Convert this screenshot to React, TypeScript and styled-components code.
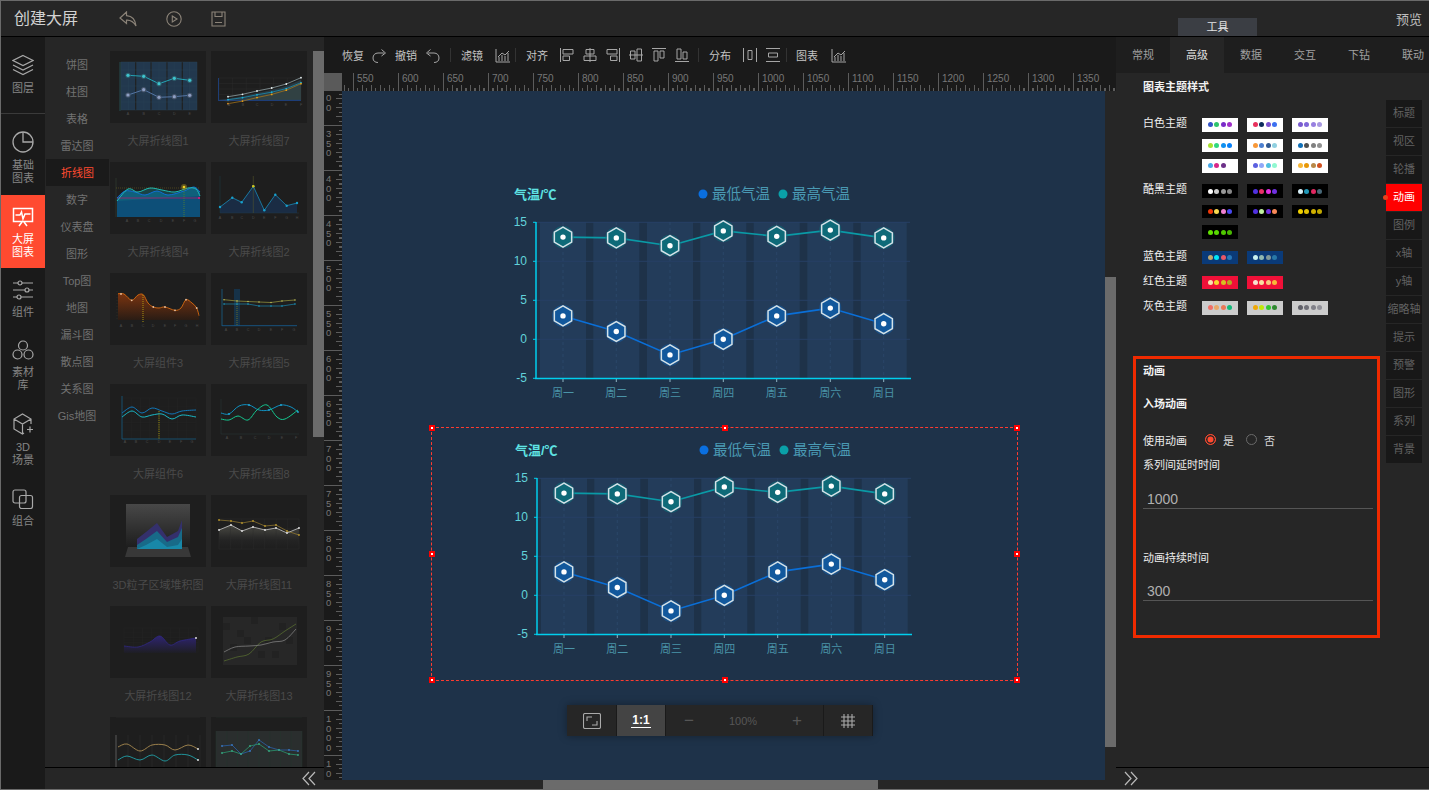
import * as React from "react";
import styled, { createGlobalStyle } from "styled-components";

const FONT = `"Liberation Sans", "Noto Sans CJK SC", sans-serif`;

const GlobalStyle = createGlobalStyle`
  html, body { margin: 0; padding: 0; background: #262626; }
  * { box-sizing: border-box; }
  body { font-family: ${FONT}; font-size: 11px; overflow: hidden; }
`;

const Frame = styled.div`
  width: 1429px;
  height: 790px;
  display: flex;
  flex-direction: column;
  overflow: hidden;
  background: #262626;
  border-top: 1px solid #6a6a6a;
  border-bottom: 1px solid #6a6a6a;
  border-left: 1px solid #6a6a6a;
`;

/* ---------- header ---------- */
const Header = styled.header`
  height: 36px;
  flex: none;
  display: flex;
  align-items: stretch;
  padding: 0 7px 0 13px;
  background: #262626;
  border-bottom: 1px solid #000;
`;
const AppTitle = styled.div`
  font-size: 16px;
  line-height: 35px;
  color: #d2d2d2;
  width: 64px;
  margin-right: 41px;
`;
const HeaderIcons = styled.div`
  display: flex;
  align-items: center;
  gap: 29px;
  color: #8b8378;
`;
const ToolTab = styled.div`
  width: 79px;
  height: 18px;
  margin: 17px 139px 0 auto;
  background: #3b3e44;
  color: #e4e4e4;
  text-align: center;
  line-height: 19px;
`;
const Preview = styled.div`
  font-size: 13px;
  line-height: 37px;
  color: #bdbdbd;
`;

const Body = styled.div`
  flex: 1;
  min-height: 0;
  display: flex;
`;

/* ---------- rail ---------- */
const Rail = styled.nav`
  width: 44px;
  flex: none;
  background: #1a1a1a;
  display: flex;
  flex-direction: column;
`;
const RailItem = styled.div<{ $h: number; $pt: number; $active?: boolean; $line?: boolean }>`
  height: ${p => p.$h}px;
  padding-top: ${p => p.$pt}px;
  display: flex;
  flex-direction: column;
  align-items: center;
  gap: 6px;
  flex: none;
  font-size: 11px;
  line-height: 13px;
  text-align: center;
  color: ${p => (p.$active ? "#fff" : "#858585")};
  background: ${p => (p.$active ? "#ff4a30" : "transparent")};
  border-bottom: ${p => (p.$line ? "1px solid #3a3a3a" : "none")};
  svg { color: ${p => (p.$active ? "#fff" : "#a8a8a8")}; flex: none; }
`;

/* ---------- library ---------- */
const Library = styled.section`
  width: 279px;
  flex: none;
  display: flex;
  flex-direction: column;
`;
const LibraryMain = styled.div`
  flex: 1;
  min-height: 0;
  display: flex;
  overflow: hidden;
  padding-top: 14px;
`;
const Categories = styled.ul`
  list-style: none;
  margin: 0;
  padding: 0;
  width: 64px;
  flex: none;
`;
const Category = styled.li<{ $active?: boolean }>`
  height: 27px;
  line-height: 29px;
  margin-left: ${p => (p.$active ? "1px" : "0")};
  text-align: center;
  color: ${p => (p.$active ? "#ff4a30" : "#727272")};
  background: ${p => (p.$active ? "#1a1a1a" : "transparent")};
`;
const ThumbGrid = styled.div`
  width: 198px;
  flex: none;
  margin-left: 1px;
  display: grid;
  grid-template-columns: 96px 96px;
  column-gap: 5px;
  grid-auto-rows: 111px;
`;
const ThumbCard = styled.div`
  display: flex;
  flex-direction: column;
`;
const ThumbArt = styled.div`
  height: 72px;
  flex: none;
  background: #1e1e1e;
  svg { display: block; }
`;
const ThumbCaption = styled.div`
  height: 36px;
  line-height: 36px;
  text-align: center;
  color: #4a4a4a;
  white-space: nowrap;
`;
const LibraryScroll = styled.div`
  width: 11px;
  margin-left: 5px;
  flex: none;
`;
const ScrollThumbV = styled.div<{ $h: number; $top?: number }>`
  width: 11px;
  height: ${p => p.$h}px;
  margin-top: ${p => p.$top ?? 0}px;
  background: #6b6b6b;
`;
const CollapseBar = styled.div<{ $right?: boolean }>`
  height: 22px;
  flex: none;
  display: flex;
  align-items: center;
  justify-content: ${p => (p.$right ? "flex-start" : "flex-end")};
  padding: ${p => (p.$right ? "0 0 0 8px" : "0 8px 0 0")};
  border-top: 1px solid #000;
  color: #b9b9b9;
`;

/* ---------- workspace ---------- */
const Workspace = styled.main`
  width: 792px;
  flex: none;
  display: flex;
  flex-direction: column;
  background: #1a1a1a;
`;
const Toolbar = styled.div`
  height: 36px;
  flex: none;
  display: flex;
  align-items: center;
  padding-left: 18px;
  color: #c4c4c4;
  svg { color: #a6a6a6; flex: none; }
`;
const ToolGroup = styled.div<{ $gap: number }>`
  display: flex;
  align-items: center;
  gap: ${p => p.$gap}px;
`;
const ToolSep = styled.span<{ $l: number; $r: number }>`
  width: 1px;
  height: 14px;
  margin: 0 ${p => p.$r}px 0 ${p => p.$l}px;
  background: #333;
  flex: none;
`;
const RulerRow = styled.div`
  height: 18px;
  flex: none;
  display: flex;
`;
const RulerCorner = styled.div`
  width: 18px;
  height: 18px;
  flex: none;
  background: #5a5a5a;
`;
const HRuler = styled.div`
  flex: 1;
  overflow: hidden;
`;
const HTrack = styled.div`
  margin-left: -34px;
  width: 810px;
  height: 18px;
  display: flex;
  background:
    repeating-linear-gradient(90deg, #5c5c5c 0 1px, transparent 1px 4.5px) left bottom / 100% 3px no-repeat,
    repeating-linear-gradient(90deg, #5c5c5c 0 1px, transparent 1px 9px) left bottom / 100% 6px no-repeat;
`;
const HMark = styled.div`
  width: 45px;
  flex: none;
  height: 18px;
  border-left: 1px solid #5c5c5c;
  padding-left: 3px;
  font-size: 10px;
  line-height: 11px;
  color: #777;
`;
const CanvasRow = styled.div`
  flex: 1;
  min-height: 0;
  display: flex;
`;
const VRuler = styled.div`
  width: 18px;
  flex: none;
  overflow: hidden;
`;
const VTrack = styled.div`
  margin-top: -11px;
  height: 720px;
  background:
    repeating-linear-gradient(180deg, #5c5c5c 0 1px, transparent 1px 4.5px) right top / 3px 100% no-repeat,
    repeating-linear-gradient(180deg, #5c5c5c 0 1px, transparent 1px 9px) right top / 6px 100% no-repeat;
`;
const VMark = styled.div<{ $first?: boolean }>`
  height: 45px;
  border-top: 1px solid #5c5c5c;
  padding: ${p => (p.$first ? "12px" : "3px")} 0 0 2px;
  font-size: 9.5px;
  line-height: 9.5px;
  color: #777;
  overflow: hidden;
  span { display: block; width: 7px; word-break: break-all; }
`;
const Canvas = styled.div`
  position: relative;
  flex: 1;
  overflow: hidden;
  background: #1e3249;
`;
const ChartNode = styled.div<{ $x: number; $y: number }>`
  position: absolute;
  left: ${p => p.$x}px;
  top: ${p => p.$y}px;
  width: 440px;
  height: 240px;
  svg { display: block; }
`;
const Selection = styled.div`
  position: absolute;
  left: 89px;
  top: 336px;
  width: 587px;
  height: 254px;
  border: 1px dashed #ff3b30;
`;
const Handle = styled.i<{ $x: string; $y: string }>`
  position: absolute;
  left: ${p => p.$x};
  top: ${p => p.$y};
  width: 6px;
  height: 6px;
  margin: -3px 0 0 -3px;
  background: #fff;
  border: 2px solid #f00;
`;
const ZoomBar = styled.div`
  position: absolute;
  left: 225px;
  top: 614px;
  height: 31px;
  display: flex;
  background: #262626;
  box-shadow: 0 0 8px rgba(0, 0, 0, 0.35);
  color: #aaa;
`;
const ZoomCell = styled.div<{ $w: number; $active?: boolean }>`
  width: ${p => p.$w}px;
  display: flex;
  align-items: center;
  justify-content: center;
  background: ${p => (p.$active ? "#444" : "transparent")};
  border-right: 1px solid #1a1a1a;
`;
const ZoomRange = styled(ZoomCell)`
  justify-content: space-between;
  padding: 0 21px 0 18px;
  color: #565656;
  font-size: 11px;
`;
const ZoomSign = styled.span`
  font-size: 17px;
  font-weight: 300;
  color: #565656;
`;
const OneToOne = styled.span`
  color: #fff;
  font-size: 12px;
  font-weight: bold;
  line-height: 13px;
  border-bottom: 1px solid #fff;
  padding: 0 1px;
`;
const VScroll = styled.div`
  width: 11px;
  flex: none;
  background: #262626;
`;
const HScroll = styled.div`
  height: 9px;
  flex: none;
  background: #262626;
  padding-left: 219px;
`;
const HThumb = styled.div`
  width: 335px;
  height: 9px;
  background: #6b6b6b;
`;

/* ---------- chart text ---------- */
const ChartTitle = styled.text`
  fill: #5fe3e3;
  font-size: 13px;
  font-weight: bold;
`;
const LegendText = styled.text`
  fill: #4a9ab4;
  font-size: 14.5px;
`;
const YLabel = styled.text`
  fill: #62d2da;
  font-size: 12px;
  text-anchor: end;
`;
const XLabel = styled.text`
  fill: #4a94a8;
  font-size: 11px;
  text-anchor: middle;
`;
const TinyLabel = styled.text`
  fill: #4c4c4c;
  font-size: 3.6px;
  text-anchor: middle;
`;

/* ---------- right panel ---------- */
const Panel = styled.aside`
  flex: 1;
  min-width: 0;
  display: flex;
  flex-direction: column;
  overflow: hidden;
`;
const Tabs = styled.div`
  height: 36px;
  flex: none;
  display: flex;
  background: #1e1e1e;
`;
const Tab = styled.div<{ $active?: boolean }>`
  width: 54px;
  flex: none;
  text-align: center;
  line-height: 36px;
  color: ${p => (p.$active ? "#dedede" : "#a0a0a0")};
  background: ${p => (p.$active ? "#262626" : "transparent")};
`;
const PanelBody = styled.div`
  flex: 1;
  min-height: 0;
  display: flex;
`;
const PanelContent = styled.div`
  width: 270px;
  flex: none;
`;
const SectionHead = styled.div`
  margin: 6px 0 0 27px;
  line-height: 16px;
  font-weight: bold;
  color: #f2f2f2;
`;
const ThemeList = styled.div`
  margin: 23px 0 0 27px;
  display: flex;
  flex-direction: column;
  gap: 11.75px;
`;
const ThemeGroup = styled.div`
  display: flex;
`;
const ThemeName = styled.div`
  width: 59px;
  flex: none;
  line-height: 11px;
  color: #f0f0f0;
`;
const SwatchGrid = styled.div`
  display: grid;
  grid-template-columns: repeat(3, 36px);
  column-gap: 9px;
  row-gap: 7px;
`;
const Swatch = styled.div<{ $bg: string }>`
  height: 13.5px;
  display: flex;
  align-items: center;
  justify-content: center;
  gap: 1.5px;
  background: ${p => p.$bg};
`;
const SwatchDot = styled.i<{ $c: string }>`
  width: 5px;
  height: 5px;
  border-radius: 50%;
  background: ${p => p.$c};
`;
const AnimBox = styled.div`
  width: 247px;
  height: 282px;
  margin: 41px 0 0 17px;
  padding: 0 5px 0 7px;
  border: 3px solid #ef2a00;
`;
const BoxHead = styled.div<{ $top: number }>`
  margin-top: ${p => p.$top}px;
  line-height: 14px;
  font-weight: bold;
  color: #f2f2f2;
`;
const FieldLabel = styled.div<{ $top: number }>`
  margin-top: ${p => p.$top}px;
  line-height: 14px;
  color: #ececec;
`;
const RadioRow = styled.div`
  margin-top: 22px;
  height: 14px;
  display: flex;
  align-items: center;
  color: #ececec;
`;
const RadioLabel = styled.span`
  width: 62px;
  flex: none;
`;
const Radio = styled.i<{ $on?: boolean }>`
  width: 11px;
  height: 11px;
  flex: none;
  border-radius: 50%;
  border: 1px solid ${p => (p.$on ? "#ff4a30" : "#6a6a6a")};
  background: ${p => (p.$on ? "#ff4a30" : "transparent")};
  box-shadow: ${p => (p.$on ? "inset 0 0 0 1.5px #262626" : "none")};
`;
const RadioText = styled.span<{ $gap: number }>`
  margin: 0 ${p => p.$gap}px 0 7px;
  color: #d8d8d8;
`;
const NumberInput = styled.input<{ $top: number }>`
  display: block;
  width: 230px;
  height: 18px;
  margin-top: ${p => p.$top}px;
  padding: 0 0 0 4px;
  background: transparent;
  border: none;
  border-bottom: 1px solid #555;
  outline: none;
  color: #b0b0b0;
  font-family: ${FONT};
  font-size: 14px;
`;
const SideTabs = styled.div`
  width: 36px;
  flex: none;
  padding-top: 27px;
  display: flex;
  flex-direction: column;
  gap: 1px;
`;
const SideTab = styled.div<{ $active?: boolean }>`
  position: relative;
  height: 27px;
  line-height: 27px;
  text-align: center;
  white-space: nowrap;
  color: ${p => (p.$active ? "#fff" : "#626262")};
  background: ${p => (p.$active ? "#f00" : "#181818")};
`;
const ActiveMark = styled.i`
  position: absolute;
  left: -3px;
  top: 11px;
  width: 5px;
  height: 5px;
  border-radius: 50%;
  background: #e8401c;
`;

/* ---------- drawing helpers ---------- */
type Pt = number[];

const poly = (p: Pt[]) => p.map(q => q.join(",")).join(" ");

// catmull-rom through the points, good enough for the little wave thumbnails
const smooth = (p: Pt[]) => {
  let d = `M${p[0][0]} ${p[0][1]}`;
  for (let i = 0; i < p.length - 1; i++) {
    const a = p[Math.max(i - 1, 0)];
    const b = p[i];
    const c = p[i + 1];
    const e = p[Math.min(i + 2, p.length - 1)];
    d += ` C${b[0] + (c[0] - a[0]) / 6} ${b[1] + (c[1] - a[1]) / 6} ${c[0] - (e[0] - b[0]) / 6} ${c[1] - (e[1] - b[1]) / 6} ${c[0]} ${c[1]}`;
  }
  return d;
};

const Line = ({ p, c, w = 1 }: { p: Pt[]; c: string; w?: number }) => (
  <polyline points={poly(p)} fill="none" stroke={c} strokeWidth={w} />
);
const Curve = ({ p, c, w = 1 }: { p: Pt[]; c: string; w?: number }) => (
  <path d={smooth(p)} fill="none" stroke={c} strokeWidth={w} />
);
const Dots = ({ p, c, r = 1 }: { p: Pt[]; c: string; r?: number }) => (
  <>
    {p.map((q, i) => (
      <circle key={i} cx={q[0]} cy={q[1]} r={r} fill={c} />
    ))}
  </>
);
const Letters = ({ xs, y, labels = "ABCDEFGH" }: { xs: number[]; y: number; labels?: string }) => (
  <>
    {xs.map((x, i) => (
      <TinyLabel key={i} x={x} y={y}>
        {labels[i]}
      </TinyLabel>
    ))}
  </>
);
const Grid = ({ x, y, w, h, nx, ny, c = "#2e2e2e" }: { x: number; y: number; w: number; h: number; nx: number; ny: number; c?: string }) => (
  <g stroke={c} strokeWidth={0.4}>
    {Array.from({ length: nx + 1 }, (_, i) => (
      <line key={"v" + i} x1={x + (w * i) / nx} x2={x + (w * i) / nx} y1={y} y2={y + h} />
    ))}
    {Array.from({ length: ny + 1 }, (_, i) => (
      <line key={"h" + i} x1={x} x2={x + w} y1={y + (h * i) / ny} y2={y + (h * i) / ny} />
    ))}
  </g>
);

const shift = (p: Pt[], dy: number) => p.map(q => [q[0], q[1] + dy]);

const t1a: Pt[] = [[18, 24.3], [33.7, 25.3], [49, 32.7], [64.3, 27.3], [79.7, 29.3]];
const t1b: Pt[] = [[18, 44], [33.7, 38.7], [49, 46.3], [64.3, 45.7], [79.7, 44.3]];
const t7: Pt[] = [[17, 45.7], [31.5, 43.3], [46, 40], [60.7, 37], [75.3, 33], [90, 26.7]];
const t4a: Pt[] = [[7, 36], [15, 29], [25, 30], [35, 33], [47, 29], [58, 33], [74, 29], [84, 25], [90, 30]];
const t4b: Pt[] = [[7, 39], [18, 27], [28, 30], [40, 26], [52, 28], [65, 30], [78, 26], [86, 27], [90, 34]];
const t2: Pt[] = [[9, 45], [21.3, 35.7], [30.7, 40.3], [42.3, 24.3], [53.3, 48.3], [64.3, 32.7], [75.7, 43.7], [86, 41]];
const t3: Pt[] = [[8, 20.7], [14, 21], [21.7, 27.3], [28, 22], [33.3, 21.7], [38, 30], [43.3, 34], [49, 35], [55, 34], [65, 37.3], [71, 35], [76, 26.7], [82, 30], [86.7, 35], [89, 42.7]];
const t6a: Pt[] = [[12, 29], [22, 23], [32, 29], [42, 24], [52, 27], [62, 30], [72, 27], [86, 26]];
const t6b: Pt[] = [[12, 33], [22, 27], [32, 33], [42, 31], [52, 30], [62, 35], [72, 31], [86, 33]];
const t8a: Pt[] = [[10, 29], [18, 30], [28, 22], [38, 21], [48, 26], [58, 26], [70, 21], [80, 23], [87, 28]];
const t8b: Pt[] = [[10, 35], [18, 36], [27, 32], [37, 36], [46, 26], [56, 21], [66, 33], [74, 35], [87, 26]];
const t11a: Pt[] = [[8, 25], [20, 26], [31, 28], [42, 26], [54, 31], [65, 30], [76, 36], [88, 40]];
const t11b: Pt[] = [[8, 35], [20, 30], [31, 36], [42, 32], [54, 35], [65, 33], [76, 38], [88, 33]];
const t12: Pt[] = [[14, 40], [28, 41], [40, 36], [50, 30], [60, 39], [70, 35], [86, 32]];

const thumbs: { title?: string; art: React.ReactNode }[] = [
  {
    title: "大屏折线图1",
    art: (
      <>
        {[11, 26.5, 42, 57.5, 73].map(x => (
          <rect key={x} x={x} y={11} width={14} height={48} fill="#22384e" />
        ))}
        <Grid x={11} y={11} w={76} h={48} nx={10} ny={6} c="#2b4358" />
        <line x1={10} x2={10} y1={11} y2={60} stroke="#2a6a70" strokeWidth={0.6} />
        <Line p={t1a} c="#24b0c0" w={0.9} />
        <Dots p={t1a} c="#2e5f6c" r={2.6} />
        <Dots p={t1a} c="#3ec4d0" r={1.6} />
        <Line p={t1b} c="#5a7cae" w={0.9} />
        <Dots p={t1b} c="#48566c" r={2.6} />
        <Dots p={t1b} c="#8d9fc4" r={1.6} />
        <Letters xs={[18, 33.7, 49, 64.3, 79.7]} y={64} />
      </>
    ),
  },
  {
    title: "大屏折线图7",
    art: (
      <>
        <Grid x={8} y={27} w={82} h={22} nx={6} ny={4} />
        <polygon points={`8,49 ${poly(shift(t7, 5))} 90,49`} fill="#3c3a26" />
        <polygon points={`8,49 ${poly(shift(t7, 2))} 90,49`} fill="#2c4450" opacity={0.7} />
        <line x1={7.5} x2={7.5} y1={27} y2={49} stroke="#1d4a9a" strokeWidth={0.7} />
        <line x1={7} x2={90} y1={49.4} y2={49.4} stroke="#1d4a9a" strokeWidth={0.8} />
        <Line p={t7} c="#9fb3b8" w={0.7} />
        <Line p={shift(t7, 3).map((q, i) => [q[0], q[1] + i * 0.4])} c="#189ac0" w={0.7} />
        <Line p={shift(t7, 6).map((q, i) => [q[0], q[1] - i * 0.2 + 1])} c="#b07a18" w={0.7} />
        <Dots p={t7} c="#e8f0f0" r={0.9} />
        <Dots p={shift(t7, 3).map((q, i) => [q[0], q[1] + i * 0.4])} c="#18b0d8" r={0.9} />
        <Dots p={shift(t7, 6).map((q, i) => [q[0], q[1] - i * 0.2 + 1])} c="#e8a018" r={0.9} />
        <Letters xs={[18, 32, 46, 61, 75, 90]} y={55} />
      </>
    ),
  },
  {
    title: "大屏折线图4",
    art: (
      <>
        <line x1={6} x2={6} y1={16} y2={55} stroke="#3a4a3a" strokeWidth={0.5} />
        <path d={`${smooth(t4a)} L90 55 L7 55 Z`} fill="#0d4f78" />
        <path d={`${smooth(t4b)} L90 34 L7 39 Z`} fill="#157a80" opacity={0.4} />
        <line x1={6} x2={90} y1={26} y2={26} stroke="#7a6a20" strokeWidth={0.5} strokeDasharray="1 1" />
        <line x1={7} x2={90} y1={36} y2={36} stroke="#c0186a" strokeWidth={0.7} />
        <Curve p={t4a} c="#1070e0" w={0.9} />
        <Curve p={t4b} c="#20c8c0" w={0.9} />
        <line x1={74} x2={74} y1={26} y2={55} stroke="#4a7a3a" strokeWidth={1} strokeDasharray="1 1" />
        <circle cx={74} cy={25} r={3} fill="#a08a20" opacity={0.5} />
        <circle cx={74} cy={25} r={1.3} fill="#f0d020" />
        <circle cx={89} cy={36} r={1} fill="#e01878" />
        <Letters xs={[17, 28, 39, 51, 63, 74, 85]} y={60} labels="ABCDEFG" />
      </>
    ),
  },
  {
    title: "大屏折线图2",
    art: (
      <>
        <polygon points={`9,51 ${poly(t2)} 86,51`} fill="#1a2c44" />
        <line x1={9} x2={9} y1={14} y2={51} stroke="#1f3f44" strokeWidth={0.5} />
        <line x1={9} x2={88} y1={51} y2={51} stroke="#203a48" strokeWidth={0.5} />
        <line x1={42.3} x2={42.3} y1={14} y2={51} stroke="#5c5c2a" strokeWidth={0.5} />
        <Line p={t2} c="#1a8ab8" w={0.8} />
        <Dots p={t2} c="#18a0cc" r={1.2} />
        <circle cx={42.3} cy={24.3} r={1.3} fill="#d8c010" />
        <Letters xs={t2.map(q => q[0])} y={57} />
      </>
    ),
  },
  {
    title: "大屏组件3",
    art: (
      <>
        <defs>
          <linearGradient id="fireFill" x1="0" x2="0" y1="0" y2="1">
            <stop offset="0" stopColor="#7a3410" />
            <stop offset="1" stopColor="#2a1c14" />
          </linearGradient>
        </defs>
        <path d={`${smooth(t3)} L89 47 L8 47 Z`} fill="url(#fireFill)" />
        <line x1={7} x2={7} y1={18} y2={48} stroke="#3a3a2a" strokeWidth={0.5} strokeDasharray="1 2" />
        <Curve p={t3} c="#d86a10" w={0.9} />
        <Dots p={[[11, 21], [21.7, 27.3], [43.3, 34], [55, 34], [65, 37.3], [76, 26.7], [86.7, 35]]} c="#e8c0a0" r={0.9} />
        <line x1={33} x2={33} y1={22} y2={50} stroke="#b8a010" strokeWidth={0.9} strokeDasharray="1 1" />
        <Letters xs={[11, 22, 33, 43, 55, 65, 76, 87]} y={54} />
      </>
    ),
  },
  {
    title: "大屏折线图5",
    art: (
      <>
        <rect x={23} y={16} width={6} height={37} fill="#163248" />
        <line x1={11} x2={11} y1={16} y2={53} stroke="#186a9a" strokeWidth={0.7} />
        <line x1={11} x2={86} y1={52.7} y2={52.7} stroke="#16588a" strokeWidth={0.9} />
        <line x1={26} x2={26} y1={27} y2={53} stroke="#7a7a20" strokeWidth={0.8} strokeDasharray="1 1" />
        <Line p={[[13, 26.7], [26, 28], [37, 28.5], [48, 29], [60, 29.5], [71, 28], [84, 27]]} c="#9c9c40" w={0.7} />
        <Line p={[[13, 31], [26, 31], [37, 31], [48, 33], [60, 33], [71, 33], [84, 31]]} c="#1a88b0" w={0.7} />
        <Dots p={[[13, 26.7], [26, 28], [37, 28.5], [48, 29], [60, 29.5], [71, 28], [84, 27]]} c="#b8b858" r={0.8} />
        <Dots p={[[13, 31], [26, 31], [37, 31], [48, 33], [60, 33], [71, 33], [84, 31]]} c="#1a98c0" r={0.8} />
        <Letters xs={[15, 26, 37, 48, 60, 71, 83]} y={58} />
      </>
    ),
  },
  {
    title: "大屏组件6",
    art: (
      <>
        <Grid x={12} y={14} w={74} h={41} nx={8} ny={5} c="#262626" />
        <line x1={12} x2={12} y1={12} y2={55} stroke="#155a80" strokeWidth={0.8} />
        <line x1={12} x2={86} y1={55} y2={55} stroke="#155a80" strokeWidth={0.8} />
        <line x1={49} x2={49} y1={27} y2={55} stroke="#a89a10" strokeWidth={0.9} strokeDasharray="1.2 1" />
        <Curve p={t6a} c="#1080c8" w={0.9} />
        <Curve p={t6b} c="#18c8d8" w={0.9} />
        <Letters xs={[15, 26, 37, 49, 60, 71, 82]} y={59} />
      </>
    ),
  },
  {
    title: "大屏折线图8",
    art: (
      <>
        <line x1={10} x2={10} y1={15} y2={50} stroke="#2a3a3a" strokeWidth={0.5} />
        <line x1={10} x2={88} y1={50} y2={50} stroke="#2a3a3a" strokeWidth={0.5} />
        <Curve p={t8a} c="#1090c0" w={1} />
        <Curve p={t8b} c="#14c890" w={1} />
        <Dots p={[[18, 30], [38, 21], [58, 26], [70, 21], [87, 28]]} c="#20a8d8" r={0.9} />
        <Letters xs={[16, 30, 44, 58, 71, 85]} y={55} />
      </>
    ),
  },
  {
    title: "3D粒子区域堆积图",
    art: (
      <>
        <defs>
          <linearGradient id="plate" x1="0" x2="0" y1="0" y2="1">
            <stop offset="0" stopColor="#484848" />
            <stop offset="1" stopColor="#1e1e1e" />
          </linearGradient>
        </defs>
        <rect x={16} y={9} width={64} height={43} fill="url(#plate)" />
        <polygon points="18,52 78,52 81,62 15,62" fill="#383838" />
        <polygon points="27,44 36,37 47,28 57,42 68,36 72,25 72,54 27,54" fill="#34306c" />
        <polygon points="27,50 36,44 47,36 57,47 68,42 72,33 72,54 27,54" fill="#186a88" />
        <polygon points="27,54 36,50 47,44 57,52 68,50 72,44 72,54" fill="#1888a8" />
      </>
    ),
  },
  {
    title: "大屏折线图11",
    art: (
      <>
        <defs>
          <linearGradient id="fog" x1="0" x2="0" y1="0" y2="1">
            <stop offset="0" stopColor="#4a4a44" />
            <stop offset="0.6" stopColor="#242424" />
            <stop offset="1" stopColor="#1e1e1e" />
          </linearGradient>
        </defs>
        <polygon points={`8,54 ${poly(t11b)} 88,54`} fill="url(#fog)" />
        <Grid x={8} y={24} w={80} h={30} nx={7} ny={3} />
        <Line p={t11a} c="#8c7430" w={0.8} />
        <Line p={t11b} c="#c8c8c8" w={0.8} />
        <Dots p={t11a} c="#b8962c" r={0.9} />
        <Dots p={t11b} c="#e8e8e8" r={0.9} />
      </>
    ),
  },
  {
    title: "大屏折线图12",
    art: (
      <>
        <defs>
          <linearGradient id="violet" x1="0" x2="0" y1="0" y2="1">
            <stop offset="0" stopColor="#2e2470" />
            <stop offset="1" stopColor="#1e1e24" />
          </linearGradient>
        </defs>
        <Grid x={14} y={22} w={74} h={24} nx={8} ny={5} c="#262626" />
        <path d={smooth(t12) + " L86 47 L14 47 Z"} fill="url(#violet)" />
        <Curve p={t12} c="#30288c" w={0.7} />
        <circle cx={86} cy={32} r={1} fill="#dcdcdc" />
      </>
    ),
  },
  {
    title: "大屏折线图13",
    art: (
      <>
        <rect x={12} y={11} width={74} height={48} fill="#272727" />
        {[[12, 17], [26, 24], [40, 11], [54, 31], [68, 17], [19, 38], [47, 45], [61, 45], [75, 31], [33, 31]].map((q, i) => (
          <rect key={i} x={q[0]} y={q[1]} width={7} height={7} fill="#222" />
        ))}
        <Curve p={[[13, 55], [26, 51], [38, 48], [50, 36], [62, 33], [74, 25], [85, 18]]} c="#5c7430" w={0.7} />
        <Curve p={[[13, 46], [24, 41], [38, 40], [50, 39], [62, 36], [74, 34], [85, 23]]} c="#8c8c8c" w={0.7} />
      </>
    ),
  },
  {
    art: (
      <>
        <line x1={6} x2={6} y1={18} y2={51} stroke="#888" strokeWidth={0.6} />
        <Grid x={6} y={18} w={84} h={33} nx={7} ny={0} c="#333" />
        <Curve p={[[8, 30], [17, 27], [30, 34], [42, 28], [55, 28], [65, 33], [78, 28], [88, 32]]} c="#a88a50" w={0.9} />
        <Curve p={[[8, 43], [17, 39], [30, 43], [42, 38], [55, 44], [65, 38], [78, 38], [88, 43]]} c="#20a0a8" w={0.9} />
        <circle cx={88} cy={32} r={1} fill="#ddd" />
        <circle cx={88} cy={43} r={1} fill="#ddd" />
      </>
    ),
  },
  {
    art: (
      <>
        <rect x={5} y={14} width={86} height={40} fill="#2a2e2e" />
        <Grid x={5} y={14} w={86} h={40} nx={8} ny={0} c="#24382e" />
        <Line p={[[11, 29], [21, 28], [30, 37], [39, 34], [48, 23], [58, 30], [68, 33], [78, 33], [87, 34]]} c="#2a5a9a" w={0.9} />
        <Line p={[[11, 36], [21, 34], [30, 37], [39, 29], [48, 27], [58, 34], [68, 33], [78, 37], [87, 38]]} c="#2a8a68" w={0.9} />
        <Dots p={[[11, 29], [21, 28], [30, 37], [39, 34], [48, 23], [58, 30], [68, 33], [78, 33], [87, 34]]} c="#3a78c0" r={0.9} />
        <Dots p={[[11, 36], [21, 34], [30, 37], [39, 29], [48, 27], [58, 34], [68, 33], [78, 37], [87, 38]]} c="#38a880" r={0.9} />
      </>
    ),
  },
];

/* ---------- big chart ---------- */
const DAYS = ["周一", "周二", "周三", "周四", "周五", "周六", "周日"];
const XS = [73, 126.3, 180, 233.3, 286.7, 340.3, 393.7];
const HIGH = [13.1, 13, 12, 13.9, 13.2, 14, 13];
const LOW = [3, 1, -2, 0, 3, 4, 2];
const valY = (v: number) => 169.3 - v * 7.8;

const hexagon = (x: number, y: number, r: number) =>
  [0, 1, 2, 3, 4, 5]
    .map(i => {
      const a = Math.PI / 6 + (i * Math.PI) / 3;
      return `${x + r * Math.cos(a)},${y + r * Math.sin(a)}`;
    })
    .join(" ");

const Series = ({ data, line, fill }: { data: number[]; line: string; fill: string }) => (
  <g>
    <polyline points={data.map((v, i) => `${XS[i]},${valY(v)}`).join(" ")} fill="none" stroke={line} strokeWidth={1.6} />
    {data.map((v, i) => (
      <g key={i}>
        <circle cx={XS[i]} cy={valY(v)} r={11} fill={fill} opacity={0.6} />
        <polygon points={hexagon(XS[i], valY(v), 10)} fill={fill} stroke="#d4e2e8" strokeWidth={1.5} />
        <circle cx={XS[i]} cy={valY(v)} r={2.7} fill="#fff" />
      </g>
    ))}
  </g>
);

const TempChart = () => (
  <svg width={440} height={240} viewBox="0 0 440 240">
    <ChartTitle x={24} y={29}>气温/℃</ChartTitle>
    <circle cx={213} cy={24} r={4.5} fill="#0a6fe0" />
    <LegendText x={222} y={29}>最低气温</LegendText>
    <circle cx={293} cy={24} r={4.5} fill="#0aa0a8" />
    <LegendText x={302} y={29}>最高气温</LegendText>
    {XS.map(x => (
      <rect key={x} x={x - 23} y={52} width={46} height={156} fill="#233c5a" />
    ))}
    {[15, 10, 5, 0].map(v => (
      <line key={v} x1={46} x2={420} y1={valY(v)} y2={valY(v)} stroke="#263f64" strokeWidth={1} />
    ))}
    {XS.map(x => (
      <line key={x} x1={x} x2={x} y1={52} y2={208} stroke="#2a4668" strokeWidth={1} strokeDasharray="3 3" />
    ))}
    {[15, 10, 5, 0, -5].map(v => (
      <g key={v}>
        <line x1={43} x2={46} y1={valY(v)} y2={valY(v)} stroke="#00cfee" strokeWidth={1} />
        <YLabel x={37} y={valY(v) + 4}>{v}</YLabel>
      </g>
    ))}
    <line x1={46} x2={46} y1={52} y2={209} stroke="#00cfee" strokeWidth={1.5} />
    <line x1={45} x2={421} y1={208.4} y2={208.4} stroke="#00cfee" strokeWidth={1.5} />
    <Series data={HIGH} line="#0a9aa6" fill="#0e6a78" />
    <Series data={LOW} line="#0a6fd8" fill="#12589c" />
    {XS.map((x, i) => (
      <g key={x}>
        <line x1={x} x2={x} y1={209} y2={212} stroke="#8fb4c4" strokeWidth={1} />
        <XLabel x={x} y={227}>{DAYS[i]}</XLabel>
      </g>
    ))}
  </svg>
);

/* ---------- little icons ---------- */
const Ico = ({ s = 22, w, h, sw = 1.3, children }: { s?: number; w?: number; h?: number; sw?: number; children: React.ReactNode }) => (
  <svg width={w ?? s} height={h ?? s} viewBox={`0 0 ${w ?? s} ${h ?? s}`} fill="none" stroke="currentColor" strokeWidth={sw}>
    {children}
  </svg>
);

const ChartGlyph = () => (
  <Ico w={15} h={15} sw={1}>
    <path d="M1 1V14H15M4 13V9M7 13V7M10 13V8M13 13V5M3 9L7 5L10 7L14 3" />
  </Ico>
);
const AlignGlyph = ({ d }: { d: string }) => (
  <Ico w={14} h={14} sw={1}>
    <path d={d} />
  </Ico>
);

const ALIGN = [
  "M.5 0V14M3 1.5H13V6H3ZM3 8H9.5V12.5H3Z",
  "M7 0V14M3 1.5H11V6H3ZM1 8H13V12.5H1Z",
  "M13.5 0V14M1 1.5H11V6H1ZM4.5 8H11V12.5H4.5Z",
  "M0 7H14M1.5 3H6V11H1.5ZM8 1H12.5V13H8Z",
  "M0 .5H14M2 3H6V13H2ZM8 3H12V10H8Z",
  "M0 13.5H14M2 1H6V11H2ZM8 4H12V11H8Z",
];

const CATEGORIES = ["饼图", "柱图", "表格", "雷达图", "折线图", "数字", "仪表盘", "图形", "Top图", "地图", "漏斗图", "散点图", "关系图", "Gis地图"];
const H_MARKS = Array.from({ length: 18 }, (_, i) => 500 + i * 50);
const V_MARKS = ["00", "350", "400", "450", "500", "550", "600", "650", "700", "750", "800", "850", "900", "950", "1000", "10"];
const TABS = ["常规", "高级", "数据", "交互", "下钻", "联动"];
const SIDE_TABS = ["标题", "视区", "轮播", "动画", "图例", "x轴", "y轴", "缩略轴", "提示", "预警", "图形", "系列", "背景"];

const THEMES: { name: string; bg: string; swatches: string[] }[] = [
  {
    name: "白色主题",
    bg: "#fff",
    swatches: [
      "#3454c8,#2ec46c,#7a2cc8,#a030c8", "#e8305c,#0c2c5c,#7a50d0,#3c70f0", "#7a5cd0,#8068d8,#9880e0,#a898e0",
      "#a8e030,#30d880,#1090f0,#0880f8", "#f89838,#4c80d0,#305890,#90d0e0", "#1070b8,#505050,#808080,#909090",
      "#48a8e8,#d82888,#6c3088,#fff", "#5c60e0,#90a8f8,#50c0e0,#90f8d0", "#f8b838,#e89808,#b88848,#d05020",
    ],
  },
  {
    name: "酷黑主题",
    bg: "#000",
    swatches: [
      "#fff,#ccc,#999,#888", "#5030e0,#e83068,#e030e0,#7030e0", "#d8f0f8,#2098b8,#e02860,#486878",
      "#f03808,#f8d850,#f080d0,#4848f0", "#5030e0,#c0f0a0,#7030e0,#f88858", "#f0d000,#e0c000,#d0b000,#c0a800",
      "#60e000,#58d800,#50c800,#48b800",
    ],
  },
  { name: "蓝色主题", bg: "#0a3a78", swatches: ["#c0a870,#00e8f8,#e85868,#2878b8", "#c8f0f0,#90b8b0,#809898,#2878a8"] },
  { name: "红色主题", bg: "#f01038", swatches: ["#f8e0b0,#f8d830,#d8c020,#b8a820", "#f8e0d0,#f8e0a0,#f8c880,#f8b838"] },
  { name: "灰色主题", bg: "#ccc", swatches: ["#f07068,#e8a868,#e87858,#10b878", "#f0a808,#c0e808,#30c830,#308830", "#606068,#707078,#808088,#909098"] },
];

const HANDLES: [string, string][] = [
  ["0", "0"], ["50%", "0"], ["100%", "0"],
  ["0", "50%"], ["100%", "50%"],
  ["0", "100%"], ["50%", "100%"], ["100%", "100%"],
];

export default function App() {
  return (
    <Frame>
      <GlobalStyle />
      <Header>
        <AppTitle>创建大屏</AppTitle>
        <HeaderIcons>
          <Ico w={18} h={16} sw={1.2}>
            <path d="M7.5 1L1 7L7.5 12.5V9.2C11 9 14.5 10.5 17 15C16.5 9 13 5 7.5 4.6Z" />
          </Ico>
          <Ico w={16} h={16} sw={1.1}>
            <circle cx={8} cy={8} r={7.2} />
            <path d="M6.3 5L11 8L6.3 11Z" />
          </Ico>
          <Ico w={15} h={16} sw={1.1}>
            <path d="M1 1H14V15H1ZM4 1V5.5H11V1M4 11.5H11" />
          </Ico>
        </HeaderIcons>
        <ToolTab>工具</ToolTab>
        <Preview>预览</Preview>
      </Header>
      <Body>
        <Rail>
          <RailItem $h={77} $pt={17} $line>
            <Ico s={22} sw={1.2}>
              <path d="M11 1.5L21 6.5L11 11.5L1 6.5ZM1 11L11 16L21 11M1 15.5L11 20.5L21 15.5" />
            </Ico>
            <span>图层</span>
          </RailItem>
          <RailItem $h={81} $pt={17}>
            <Ico s={22}>
              <circle cx={11} cy={11} r={10} />
              <path d="M11 1V11H21" />
            </Ico>
            <span>基础<br />图表</span>
          </RailItem>
          <RailItem $h={73} $active $pt={12}>
            <Ico w={22} h={20} sw={1.5}>
              <path d="M1.5 1.5H20.5V14.5H1.5ZM3.5 8H8L9.5 5L11 12L13 7H18.5M7 19L10 15M15 19L12 15" />
            </Ico>
            <span>大屏<br />图表</span>
          </RailItem>
          <RailItem $h={67} $pt={12}>
            <Ico w={22} h={20} sw={1.2}>
              <path d="M1 3H6M10 3H21M1 10H13M17 10H21M1 17H5M9 17H21" />
              <circle cx={8} cy={3} r={2} />
              <circle cx={15} cy={10} r={2} />
              <circle cx={7} cy={17} r={2} />
            </Ico>
            <span>组件</span>
          </RailItem>
          <RailItem $h={70} $pt={5}>
            <Ico w={22} h={20} sw={1.2}>
              <circle cx={11} cy={5.5} r={4.5} />
              <circle cx={5.5} cy={14.5} r={4.5} />
              <circle cx={16.5} cy={14.5} r={4.5} />
            </Ico>
            <span>素材<br />库</span>
          </RailItem>
          <RailItem $h={71} $pt={8}>
            <Ico w={22} h={22} sw={1.2}>
              <path d="M19 11V6L10.5 1L2 6V16L10.5 21L12 20M2 6L10.5 11L19 6M10.5 11V21M15 16.5H21M18 13.5V19.5" />
            </Ico>
            <span>3D<br />场景</span>
          </RailItem>
          <RailItem $h={60} $pt={13}>
            <Ico w={22} h={20} sw={1.2}>
              <rect x={1} y={1} width={13} height={13} rx={2} />
              <rect x={7.5} y={6.5} width={13} height={13} rx={2} />
            </Ico>
            <span>组合</span>
          </RailItem>
        </Rail>

        <Library>
          <LibraryMain>
            <Categories>
              {CATEGORIES.map(c => (
                <Category key={c} $active={c === "折线图"}>{c}</Category>
              ))}
            </Categories>
            <ThumbGrid>
              {thumbs.map((t, i) => (
                <ThumbCard key={i}>
                  <ThumbArt>
                    <svg width={96} height={72} viewBox="0 0 96 72">{t.art}</svg>
                  </ThumbArt>
                  {t.title && <ThumbCaption>{t.title}</ThumbCaption>}
                </ThumbCard>
              ))}
            </ThumbGrid>
            <LibraryScroll>
              <ScrollThumbV $h={386} />
            </LibraryScroll>
          </LibraryMain>
          <CollapseBar>
            <Ico w={14} h={15} sw={1.2}>
              <path d="M7 1L1 7.5L7 14M13 1L7 7.5L13 14" />
            </Ico>
          </CollapseBar>
        </Library>

        <Workspace>
          <Toolbar>
            <ToolGroup $gap={8}>
              <span>恢复</span>
              <Ico w={15} h={15} sw={1}>
                <path d="M12 5H6C3 5 1 7 1 10S3 14.5 6 14.5M9.5 1.5L13.5 5L9.5 8" />
              </Ico>
              <span>撤销</span>
              <Ico w={15} h={15} sw={1}>
                <path d="M3 5H9C12 5 14 7 14 10S12 14.5 9 14.5M5.5 1.5L1.5 5L5.5 8" />
              </Ico>
            </ToolGroup>
            <ToolSep $l={10} $r={10} />
            <ToolGroup $gap={12}>
              <span>滤镜</span>
              <ChartGlyph />
            </ToolGroup>
            <ToolSep $l={5} $r={10} />
            <ToolGroup $gap={12}>
              <span>对齐</span>
              <ToolGroup $gap={9}>
                {ALIGN.map(d => (
                  <AlignGlyph key={d} d={d} />
                ))}
              </ToolGroup>
            </ToolGroup>
            <ToolSep $l={9} $r={10} />
            <ToolGroup $gap={12}>
              <span>分布</span>
              <ToolGroup $gap={9}>
                <AlignGlyph d="M.5 0V14M13.5 0V14M5 2.5H9V11.5H5Z" />
                <AlignGlyph d="M0 .5H14M0 13.5H14M2.5 5H11.5V9H2.5Z" />
              </ToolGroup>
            </ToolGroup>
            <ToolSep $l={6} $r={9} />
            <ToolGroup $gap={13}>
              <span>图表</span>
              <ChartGlyph />
            </ToolGroup>
          </Toolbar>
          <RulerRow>
            <RulerCorner />
            <HRuler>
              <HTrack>
                {H_MARKS.map(m => (
                  <HMark key={m}>{m > 500 ? m : ""}</HMark>
                ))}
              </HTrack>
            </HRuler>
          </RulerRow>
          <CanvasRow>
            <VRuler>
              <VTrack>
                {V_MARKS.map((m, i) => (
                  <VMark key={i} $first={i === 0}><span>{m}</span></VMark>
                ))}
              </VTrack>
            </VRuler>
            <Canvas>
              <ChartNode $x={148} $y={79}>
                <TempChart />
              </ChartNode>
              <ChartNode $x={149} $y={335}>
                <TempChart />
              </ChartNode>
              <Selection>
                {HANDLES.map(h => (
                  <Handle key={h.join()} $x={h[0]} $y={h[1]} />
                ))}
              </Selection>
              <ZoomBar>
                <ZoomCell $w={50}>
                  <Ico w={18} h={16} sw={1.1}>
                    <rect x={.5} y={.5} width={17} height={15} rx={1.5} />
                    <path d="M4 8V4H9M14 8V12H9" />
                  </Ico>
                </ZoomCell>
                <ZoomCell $w={49} $active>
                  <OneToOne>1:1</OneToOne>
                </ZoomCell>
                <ZoomRange $w={158}>
                  <ZoomSign>−</ZoomSign>
                  <span>100%</span>
                  <ZoomSign>+</ZoomSign>
                </ZoomRange>
                <ZoomCell $w={49}>
                  <Ico w={16} h={16} sw={1.1}>
                    <path d="M4 1V15M8 1V15M12 1V15M1 4H15M1 8H15M1 12H15" />
                  </Ico>
                </ZoomCell>
              </ZoomBar>
            </Canvas>
            <VScroll>
              <ScrollThumbV $h={470} $top={186} />
            </VScroll>
          </CanvasRow>
          <HScroll>
            <HThumb />
          </HScroll>
        </Workspace>

        <Panel>
          <Tabs>
            {TABS.map(t => (
              <Tab key={t} $active={t === "高级"}>{t}</Tab>
            ))}
          </Tabs>
          <PanelBody>
            <PanelContent>
              <SectionHead>图表主题样式</SectionHead>
              <ThemeList>
                {THEMES.map(th => (
                  <ThemeGroup key={th.name}>
                    <ThemeName>{th.name}</ThemeName>
                    <SwatchGrid>
                      {th.swatches.map(dots => (
                        <Swatch key={dots} $bg={th.bg}>
                          {dots.split(",").map((c, di) => (
                            <SwatchDot key={di} $c={c} />
                          ))}
                        </Swatch>
                      ))}
                    </SwatchGrid>
                  </ThemeGroup>
                ))}
              </ThemeList>
              <AnimBox>
                <BoxHead $top={5}>动画</BoxHead>
                <BoxHead $top={19}>入场动画</BoxHead>
                <RadioRow>
                  <RadioLabel>使用动画</RadioLabel>
                  <Radio $on />
                  <RadioText $gap={12}>是</RadioText>
                  <Radio />
                  <RadioText $gap={0}>否</RadioText>
                </RadioRow>
                <FieldLabel $top={11}>系列间延时时间</FieldLabel>
                <NumberInput $top={19} defaultValue="1000" readOnly />
                <FieldLabel $top={42}>动画持续时间</FieldLabel>
                <NumberInput $top={18} defaultValue="300" readOnly />
              </AnimBox>
            </PanelContent>
            <SideTabs>
              {SIDE_TABS.map(t => (
                <SideTab key={t} $active={t === "动画"}>
                  {t === "动画" && <ActiveMark />}
                  {t}
                </SideTab>
              ))}
            </SideTabs>
          </PanelBody>
          <CollapseBar $right>
            <Ico w={14} h={15} sw={1.2}>
              <path d="M1 1L7 7.5L1 14M7 1L13 7.5L7 14" />
            </Ico>
          </CollapseBar>
        </Panel>
      </Body>
    </Frame>
  );
}
